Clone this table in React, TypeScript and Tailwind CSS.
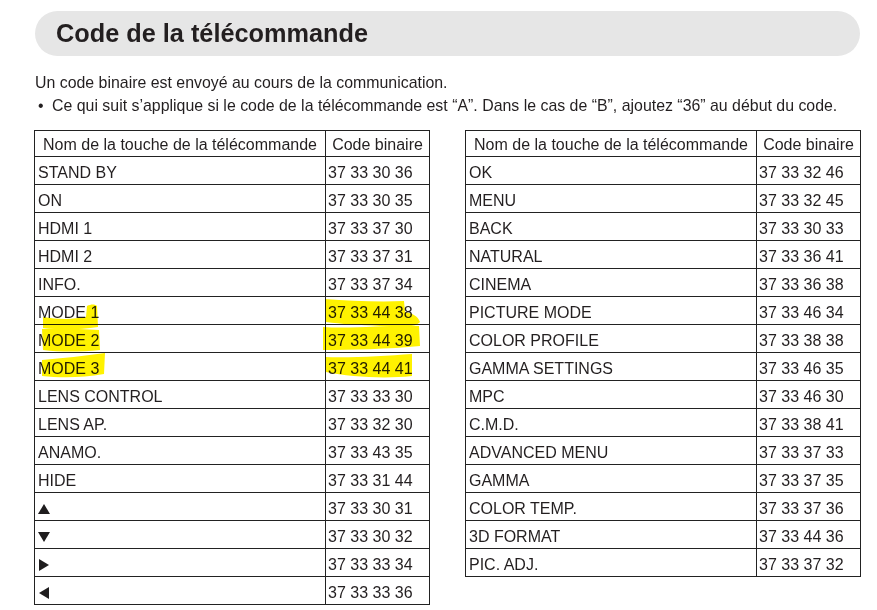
import React from "react";

type Row = { name: React.ReactNode; code: string };

const Tri = ({ dir }: { dir: "up" | "down" | "right" | "left" }) => {
  const pts = {
    up: "0,11 6,1 12,11",
    down: "0,1 12,1 6,11",
    right: "1,0 11,6 1,12",
    left: "11,0 1,6 11,12",
  }[dir];
  return (
    <svg width="12" height="12" viewBox="0 0 12 12" className="inline-block">
      <polygon points={pts} fill="#1f1d1e" />
    </svg>
  );
};

const left: Row[] = [
  { name: "STAND BY", code: "37 33 30 36" },
  { name: "ON", code: "37 33 30 35" },
  { name: "HDMI 1", code: "37 33 37 30" },
  { name: "HDMI 2", code: "37 33 37 31" },
  { name: "INFO.", code: "37 33 37 34" },
  { name: "MODE 1", code: "37 33 44 38" },
  { name: "MODE 2", code: "37 33 44 39" },
  { name: "MODE 3", code: "37 33 44 41" },
  { name: "LENS CONTROL", code: "37 33 33 30" },
  { name: "LENS AP.", code: "37 33 32 30" },
  { name: "ANAMO.", code: "37 33 43 35" },
  { name: "HIDE", code: "37 33 31 44" },
  { name: <Tri dir="up" />, code: "37 33 30 31" },
  { name: <Tri dir="down" />, code: "37 33 30 32" },
  { name: <Tri dir="right" />, code: "37 33 33 34" },
  { name: <Tri dir="left" />, code: "37 33 33 36" },
];

const right: Row[] = [
  { name: "OK", code: "37 33 32 46" },
  { name: "MENU", code: "37 33 32 45" },
  { name: "BACK", code: "37 33 30 33" },
  { name: "NATURAL", code: "37 33 36 41" },
  { name: "CINEMA", code: "37 33 36 38" },
  { name: "PICTURE MODE", code: "37 33 46 34" },
  { name: "COLOR PROFILE", code: "37 33 38 38" },
  { name: "GAMMA SETTINGS", code: "37 33 46 35" },
  { name: "MPC", code: "37 33 46 30" },
  { name: "C.M.D.", code: "37 33 38 41" },
  { name: "ADVANCED MENU", code: "37 33 37 33" },
  { name: "GAMMA", code: "37 33 37 35" },
  { name: "COLOR TEMP.", code: "37 33 37 36" },
  { name: "3D FORMAT", code: "37 33 44 36" },
  { name: "PIC. ADJ.", code: "37 33 37 32" },
];

const CodeTable = ({ rows }: { rows: Row[] }) => (
  <table className="border-collapse w-[396px] text-[16px] leading-none">
    <thead>
      <tr>
        <th className="border border-[#222] h-[26px] w-[291px] font-normal text-center whitespace-nowrap pt-[2px]">
          Nom de la touche de la télécommande
        </th>
        <th className="border border-[#222] font-normal text-center whitespace-nowrap pt-[2px]">Code binaire</th>
      </tr>
    </thead>
    <tbody>
      {rows.map((r, i) => (
        <tr key={i}>
          <td className="border border-[#222] h-[28px] pl-[3px] pr-1 pt-[4px]">{r.name}</td>
          <td className="border border-[#222] pl-[2px] pt-[4px]">{r.code}</td>
        </tr>
      ))}
    </tbody>
  </table>
);

export default function App() {
  return (
    <div className="relative w-[877px] h-[610px] bg-white overflow-hidden text-[#231f20] font-['Liberation_Sans',Arial,sans-serif]">
      <div className="pl-[35px] pr-[17px] pt-[11px]">
        <div className="h-[45px] rounded-full bg-[#e6e6e6] flex items-center pl-[21px]">
          <h1 className="text-[25.3px] font-bold">Code de la télécommande</h1>
        </div>
      </div>

      <div className="pl-[35px] pt-[15px] text-[15.9px] leading-[23px]">
        <p>Un code binaire est envoyé au cours de la communication.</p>
        <p className="flex">
          <span className="w-[17px] pl-[3px]">•</span>
          <span>Ce qui suit s’applique si le code de la télécommande est “A”. Dans le cas de “B”, ajoutez “36” au début du code.</span>
        </p>
      </div>

      <div className="flex items-start gap-[35px] pl-[34px] pt-[13px]">
        <CodeTable rows={left} />
        <CodeTable rows={right} />
      </div>

      {/* yellow marker strokes */}
      <svg
        className="absolute left-0 top-0 pointer-events-none mix-blend-multiply"
        width="877"
        height="610"
        viewBox="0 0 877 610"
      >
        <g fill="#fff200">
          <path d="M43 317 C60 320 75 319 86 317 L87 306 C91 304 95 304 97 306 L98 327 C80 330 60 330 43 328 Z" />
          <path d="M42 329 C60 328 80 329 99 330 L100 350 C80 352 60 352 43 350 Z" />
          <path d="M42 360 C62 358 85 356 105 353 L104 374 C82 378 60 378 42 376 Z" />
          <path d="M325 299 C350 301 380 302 404 301 L405 312 C412 313 418 316 420 322 C415 328 400 327 380 326 C360 325 340 324 326 322 Z" />
          <path d="M323 327 C350 329 390 325 419 326 L420 346 C390 349 350 350 323 350 Z" />
          <path d="M325 357 C350 358 385 356 412 354 L412 376 C385 379 350 377 326 372 Z" />
        </g>
      </svg>
    </div>
  );
}
